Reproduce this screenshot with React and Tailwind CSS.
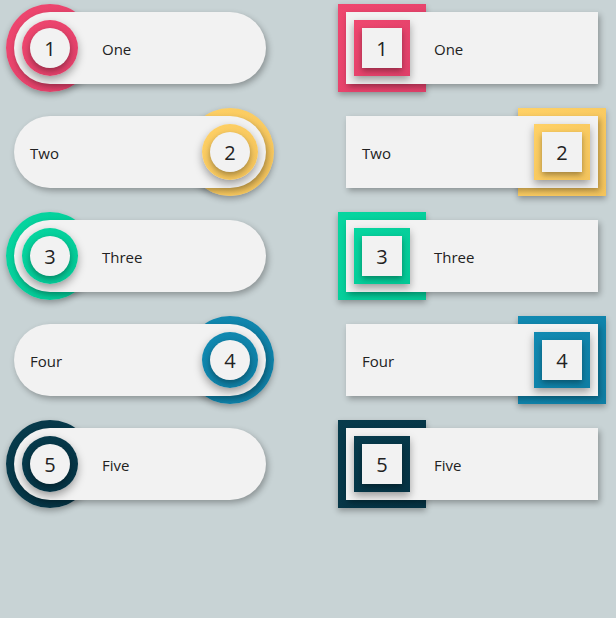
import React from 'react';

const items = [
    { n: 1, label: 'One', ring: 'bg-gradient-to-br from-[#ef476f] to-[#e0406a]', side: 'left' },
    { n: 2, label: 'Two', ring: 'bg-gradient-to-br from-[#ffd166] to-[#f4c45c]', side: 'right' },
    { n: 3, label: 'Three', ring: 'bg-gradient-to-br from-[#06d6a0] to-[#05c896]', side: 'left' },
    { n: 4, label: 'Four', ring: 'bg-gradient-to-br from-[#118ab2] to-[#0f7ea4]', side: 'right' },
    { n: 5, label: 'Five', ring: 'bg-gradient-to-br from-[#073b4c] to-[#063344]', side: 'left' },
];

const Item = ({ item, round }) => {
    const shape = round ? 'rounded-full' : '';
    const isLeft = item.side === 'left';
    return (
        <div className="relative w-[252px] h-[72px]">
            {/* big backdrop shape behind the card */}
            <div
                className={`absolute -top-2 ${isLeft ? '-left-2' : '-right-2'} w-[88px] h-[88px] ${shape} ${item.ring} shadow-[0_3px_6px_rgba(0,0,0,0.3)]`}
            />
            <div
                className={`relative h-full bg-[#f2f2f2] ${shape} shadow-[2px_3px_6px_rgba(0,0,0,0.3)] flex items-center ${isLeft ? 'pl-2' : 'pl-4 pr-2 justify-between'}`}
            >
                {!isLeft && <span className="mt-0.5 text-[15px] text-[#222]">{item.label}</span>}
                <div className={`w-14 h-14 ${shape} ${item.ring} flex items-center justify-center shadow-[0_4px_8px_rgba(0,0,0,0.35)]`}>
                    <div className={`w-10 h-10 ${shape} bg-[#f2f2f2] flex items-center justify-center shadow-[0_3px_6px_rgba(0,0,0,0.35)]`}>
                        <span className="mt-0.5 text-[20px] text-[#222]">{item.n}</span>
                    </div>
                </div>
                {isLeft && <span className="ml-6 mt-0.5 text-[15px] text-[#222]">{item.label}</span>}
            </div>
        </div>
    );
};

const App = () => {
    return (
        <div
            className="min-h-screen w-full bg-[#c8d3d5] pt-3 pl-[14px]"
            style={{ fontFamily: '"Open Sans", "Noto Sans", sans-serif' }}
        >
            <div className="grid grid-cols-[252px_252px] gap-x-20 gap-y-8">
                {items.map((item) => (
                    <React.Fragment key={item.n}>
                        <Item item={item} round />
                        <Item item={item} />
                    </React.Fragment>
                ))}
            </div>
        </div>
    );
};

export default App;
